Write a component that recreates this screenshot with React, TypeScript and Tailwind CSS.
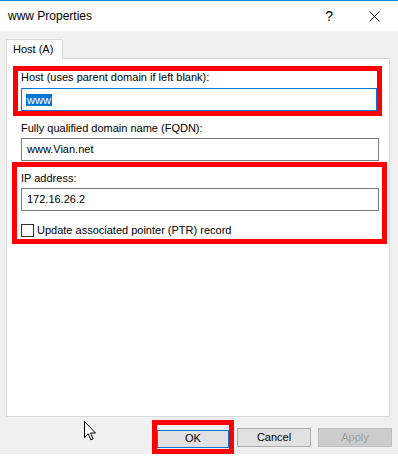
import React from "react";

function Field({ value, focused = false, selected = false, className = "" }: { value: string; focused?: boolean; selected?: boolean; className?: string }) {
  return (
    <div className={`h-[23px] border bg-white flex items-center pl-[5px] text-[11px] leading-[13px] ${focused ? "border-[#0078d7]" : "border-[#7a7a7a]"} ${className}`}>
      {selected ? <span className="bg-[#0078d7] text-white h-[12px] leading-[12px] px-px -ml-px">{value}</span> : <span>{value}</span>}
    </div>
  );
}

export default function App() {
  return (
    <div className="relative w-[398px] h-[456px] bg-white text-black font-['Liberation_Sans',Arial,sans-serif]">
      <div className="h-[454px] border-y border-[#1883d7] flex flex-col">
        {/* title bar */}
        <div className="h-[30px] bg-white flex items-center pl-[8px] shrink-0">
          <span className="text-[12px] leading-[14px]">www Properties</span>
          <span className="ml-auto text-[14px] leading-[14px] mr-[36px]">?</span>
          <svg width="11" height="11" viewBox="0 0 11 11" className="mr-[18px]">
            <path d="M0.5 0.5 L10.5 10.5 M10.5 0.5 L0.5 10.5" stroke="#000" strokeWidth="1" />
          </svg>
        </div>

        <div className="flex-1 bg-[#f0f0f0] pt-[8px] pl-[6px] pr-[8px] flex flex-col">
          {/* tab */}
          <div className="relative z-10 -mb-px w-[57px] h-[20px] bg-white border border-b-0 border-[#d9d9d9] flex items-center pl-[6px] text-[11px] leading-[13px]">
            Host (A)
          </div>

          {/* panel */}
          <div className="h-[359px] bg-white border border-[#d9d9d9] flex flex-col">
            <div className="ml-[6px] mt-[7px] w-[369px] h-[50px] border-[5px] border-[#ff0000] flex flex-col">
              <div className="h-[17px] pl-[3px] text-[11px] leading-[13px]">Host (uses parent domain if left blank):</div>
              <Field value="www" focused selected className="ml-[3px]" />
            </div>

            <div className="mt-[6px] ml-[14px] text-[11px] leading-[13px]">Fully qualified domain name (FQDN):</div>
            <Field value="www.Vian.net" className="mt-[3px] ml-[14px] w-[358px]" />

            <div className="ml-[5px] mt-[1px] w-[375px] h-[82px] border-[5px] border-[#ff0000] flex flex-col">
              <div className="mt-[5px] ml-[4px] text-[11px] leading-[13px]">IP address:</div>
              <Field value="172.16.26.2" className="mt-[3px] ml-[4px] w-[358px]" />
              <div className="mt-[13px] ml-[4px] flex items-center">
                <div className="w-[13px] h-[13px] border border-[#333333] bg-white" />
                <span className="ml-[3px] text-[11px] leading-[13px]">Update associated pointer (PTR) record</span>
              </div>
            </div>
          </div>

          {/* buttons */}
          <div className="mt-[3px] flex items-center justify-end -mr-[2px]">
            <div className="border-[5px] border-[#ff0000]">
              <button className="w-[72px] h-[18px] bg-[#e1e1e1] border border-[#0078d7] text-[11px] leading-[13px]">OK</button>
            </div>
            <button className="ml-[3px] w-[74px] h-[19px] bg-[#e1e1e1] border border-[#adadad] text-[11px] leading-[13px]">Cancel</button>
            <button className="ml-[7px] w-[74px] h-[19px] bg-[#cccccc] border border-[#bfbfbf] text-[#a0a0a0] text-[11px] leading-[13px]">Apply</button>
          </div>
        </div>
      </div>

      {/* mouse cursor */}
      <svg width="13" height="21" viewBox="0 0 13 21" className="absolute left-[84px] top-[421px]">
        <path d="M0.5 0.5 L0.5 16.5 L4.3 12.8 L6.8 18.8 L9 17.8 L6.6 12 L11.5 12 Z" fill="#fff" stroke="#000" strokeWidth="1" strokeLinejoin="miter" />
      </svg>
    </div>
  );
}
